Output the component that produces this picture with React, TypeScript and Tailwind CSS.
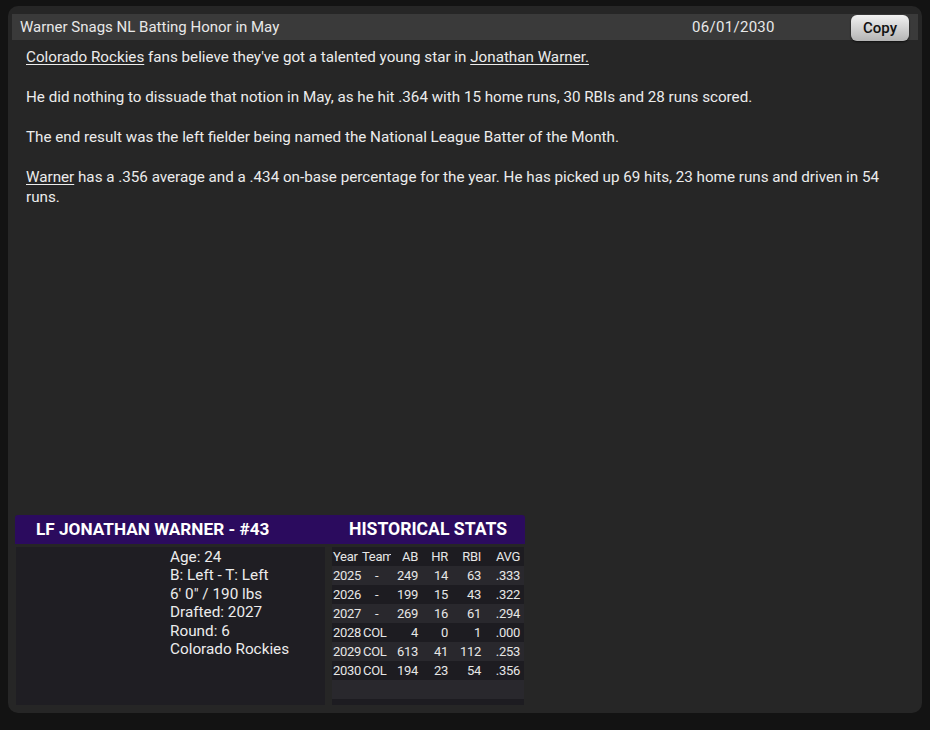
import React from 'react';

const font = { fontFamily: 'Roboto, "Noto Sans", sans-serif' };

interface StatRow {
  year: string;
  team: string;
  ab: string;
  hr: string;
  rbi: string;
  avg: string;
}

const stats: StatRow[] = [
  { year: '2025', team: '-', ab: '249', hr: '14', rbi: '63', avg: '.333' },
  { year: '2026', team: '-', ab: '199', hr: '15', rbi: '43', avg: '.322' },
  { year: '2027', team: '-', ab: '269', hr: '16', rbi: '61', avg: '.294' },
  { year: '2028', team: 'COL', ab: '4', hr: '0', rbi: '1', avg: '.000' },
  { year: '2029', team: 'COL', ab: '613', hr: '41', rbi: '112', avg: '.253' },
  { year: '2030', team: 'COL', ab: '194', hr: '23', rbi: '54', avg: '.356' },
];

function StatsTable() {
  return (
    <div className="w-[192px] h-[158px] bg-[#1d1c21] text-[13px] tracking-[-0.3px] text-[#e6e6e6]">
      <div className="flex h-[19px] items-center">
        <span className="w-[29px] pl-[1px]">Year</span>
        <span className="w-[30px] pl-[1px] overflow-hidden whitespace-nowrap">Team</span>
        <span className="w-[27px] text-right">AB</span>
        <span className="w-[30px] text-right">HR</span>
        <span className="w-[33px] text-right">RBI</span>
        <span className="w-[39px] text-right">AVG</span>
      </div>
      {stats.map((r, i) => (
        <div
          key={r.year}
          className={`flex h-[19px] items-center ${i % 2 === 0 ? 'bg-[#29282d]' : 'bg-[#1d1c21]'}`}
        >
          <span className="w-[29px] pl-[1px]">{r.year}</span>
          <span className={`w-[30px] ${r.team === '-' ? 'pl-[14px]' : 'pl-[2px]'}`}>{r.team}</span>
          <span className="w-[27px] text-right">{r.ab}</span>
          <span className="w-[30px] text-right">{r.hr}</span>
          <span className="w-[33px] text-right">{r.rbi}</span>
          <span className="w-[39px] text-right">{r.avg}</span>
        </div>
      ))}
      <div className="h-[19px] bg-[#29282d]" />
    </div>
  );
}

export default function App() {
  return (
    <div className="w-[930px] h-[730px] bg-[#131313] pt-[6px] pl-[8px]" style={font}>
      <div className="w-[914px] h-[707px] rounded-[10px] bg-[#262626] flex flex-col px-[4px] pt-[8px] pb-[8px]">
        {/* Header */}
        <div className="h-[26px] bg-[#3a3a3a] flex items-center pl-[8px] pr-[9px] text-[15px] text-[#e8e8e8]">
          <span className="flex-1">Warner Snags NL Batting Honor in May</span>
          <span className="w-[84px] mr-[75px] tracking-[0.3px]">06/01/2030</span>
          <button className="h-[26px] w-[58px] mt-[2px] rounded-[6px] bg-gradient-to-b from-[#f2f2f2] to-[#b4b4b4] text-[#111] text-[15px] font-medium shadow-[0_1px_2px_rgba(0,0,0,0.6)]">
            Copy
          </button>
        </div>

        {/* Article */}
        <div className="flex-1 pl-[14px] pr-[20px] pt-[7px] text-[15.2px] leading-[20px] text-[#ececec]">
          <p className="mb-[20px]">
            <span className="underline underline-offset-[2px]">Colorado Rockies</span> fans believe they've got a talented young star in{' '}
            <span className="underline underline-offset-[2px]">Jonathan Warner.</span>
          </p>
          <p className="mb-[20px]">
            He did nothing to dissuade that notion in May, as he hit .364 with 15 home runs, 30 RBIs and 28 runs scored.
          </p>
          <p className="mb-[20px]">The end result was the left fielder being named the National League Batter of the Month.</p>
          <p>
            <span className="underline underline-offset-[2px]">Warner</span> has a .356 average and a .434 on-base percentage for the year. He has picked up 69 hits, 23 home runs and driven in 54 runs.
          </p>
        </div>

        {/* Player card */}
        <div className="ml-[3px] w-[510px]">
          <div className="h-[29px] rounded-t-[3px] bg-[#2b0b5e] flex items-center text-white font-bold">
            <span className="w-[317px] pl-[21px] text-[17.2px]">LF JONATHAN WARNER - #43</span>
            <span className="w-[192px] text-center text-[17.6px]">HISTORICAL STATS</span>
          </div>
          <div className="mt-[3px] flex gap-[7px] h-[158px]">
            <div className="w-[309px] ml-[1px] bg-[#1f1e23] pl-[154px] pt-[1px] text-[15.3px] leading-[18.4px] text-[#ececec]">
              <div>Age: 24</div>
              <div>B: Left - T: Left</div>
              <div>6' 0" / 190 lbs</div>
              <div>Drafted: 2027</div>
              <div>Round: 6</div>
              <div>Colorado Rockies</div>
            </div>
            <StatsTable />
          </div>
        </div>
      </div>
    </div>
  );
}
